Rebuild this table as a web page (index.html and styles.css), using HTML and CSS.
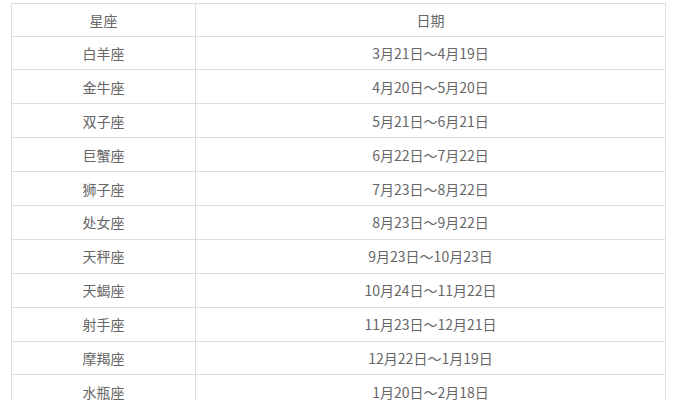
FILE: index.html
```html
<!DOCTYPE html>
<html lang="zh">
<head>
<meta charset="utf-8">
<link rel="stylesheet" href="styles.css">
</head>
<body>
<table class="zodiac">
  <thead>
    <tr><th class="c-name">星座</th><th class="c-date">日期</th></tr>
  </thead>
  <tbody>
    <tr><td>白羊座</td><td>3月21日～4月19日</td></tr>
    <tr><td>金牛座</td><td>4月20日～5月20日</td></tr>
    <tr><td>双子座</td><td>5月21日～6月21日</td></tr>
    <tr><td>巨蟹座</td><td>6月22日～7月22日</td></tr>
    <tr><td>狮子座</td><td>7月23日～8月22日</td></tr>
    <tr><td>处女座</td><td>8月23日～9月22日</td></tr>
    <tr><td>天秤座</td><td>9月23日～10月23日</td></tr>
    <tr><td>天蝎座</td><td>10月24日～11月22日</td></tr>
    <tr><td>射手座</td><td>11月23日～12月21日</td></tr>
    <tr><td>摩羯座</td><td>12月22日～1月19日</td></tr>
    <tr><td>水瓶座</td><td>1月20日～2月18日</td></tr>
    <tr><td>双鱼座</td><td>2月19日～3月20日</td></tr>
  </tbody>
</table>
</body>
</html>
```
FILE: styles.css
```css
html, body {
  margin: 0;
  padding: 0;
  background: #ffffff;
}
body {
  padding: 3px 0 0 11px;
  font-family: "Noto Sans CJK SC", "Noto Sans", sans-serif;
  font-size: 14px;
  color: #666666;
}
.zodiac {
  border-collapse: collapse;
  width: 655px;
  table-layout: fixed;
}
.zodiac th,
.zodiac td {
  border: 1.5px solid #dedede;
  height: 32.9px;
  padding: 0;
  text-align: center;
  vertical-align: middle;
  font-weight: normal;
  line-height: 1;
}
.zodiac th {
  height: 31.5px;
}
.c-name {
  width: 183px;
}
```
